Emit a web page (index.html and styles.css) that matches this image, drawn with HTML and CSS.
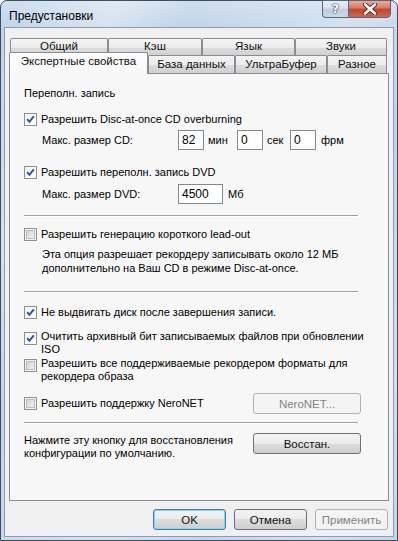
FILE: index.html
```html
<!DOCTYPE html>
<html>
<head>
<meta charset="utf-8">
<link rel="stylesheet" href="styles.css">
</head>
<body>
<div class="window">
  <div class="titlebar">
    <span class="title">Предустановки</span>
    <div class="caption">
      <span class="cap-btn help">?</span>
      <span class="cap-btn close"><svg width="16" height="12" viewBox="0 0 16 12"><path d="M3 1.5 L13 10.5 M13 1.5 L3 10.5" stroke="#5a2418" stroke-width="4.4" stroke-linecap="round"/><path d="M3 1.5 L13 10.5 M13 1.5 L3 10.5" stroke="#ffffff" stroke-width="2.6" stroke-linecap="round"/></svg></span>
    </div>
  </div>
  <div class="client">
    <div class="tabs">
      <div class="tabrow back">
        <span class="tab t98">Общий</span>
        <span class="tab t94">Кэш</span>
        <span class="tab t93">Язык</span>
        <span class="tab t92">Звуки</span>
      </div>
      <div class="tabrow front">
        <span class="tab sel">Экспертные свойства</span>
        <span class="tab t87">База данных</span>
        <span class="tab t92">УльтраБуфер</span>
        <span class="tab t60">Разное</span>
      </div>
    </div>
    <div class="page">
      <div class="group-title">Переполн. запись</div>

      <div class="cb-row m13">
        <span class="cb on"><svg width="9" height="9" viewBox="0 0 9 9"><path d="M1.2 4.2 L3.4 6.8 L7.8 1.4" fill="none" stroke="#2f4f9e" stroke-width="2"/></svg></span>
        <span class="cb-label">Разрешить Disc-at-once CD overburning</span>
      </div>
      <div class="field-row m4">
        <span class="flabel">Макс. размер CD:</span>
        <span class="input w26">82</span>
        <span class="unit u-min">мин</span>
        <span class="input w26">0</span>
        <span class="unit u-sek">сек</span>
        <span class="input w26">0</span>
        <span class="unit u-frm">фрм</span>
      </div>

      <div class="cb-row m16">
        <span class="cb on"><svg width="9" height="9" viewBox="0 0 9 9"><path d="M1.2 4.2 L3.4 6.8 L7.8 1.4" fill="none" stroke="#2f4f9e" stroke-width="2"/></svg></span>
        <span class="cb-label">Разрешить переполн. запись DVD</span>
      </div>
      <div class="field-row m5">
        <span class="flabel">Макс. размер DVD:</span>
        <span class="input w45">4500</span>
        <span class="unit u-mb">Мб</span>
      </div>

      <div class="sep m11"></div>

      <div class="cb-row m11">
        <span class="cb"></span>
        <span class="cb-label">Разрешить генерацию короткого lead-out</span>
      </div>
      <p class="note">Эта опция разрешает рекордеру записывать около 12 МБ<br>дополнительно на Ваш CD в режиме Disc-at-once.</p>

      <div class="sep m16"></div>

      <div class="cb-row m13">
        <span class="cb on"><svg width="9" height="9" viewBox="0 0 9 9"><path d="M1.2 4.2 L3.4 6.8 L7.8 1.4" fill="none" stroke="#2f4f9e" stroke-width="2"/></svg></span>
        <span class="cb-label">Не выдвигать диск после завершения записи.</span>
      </div>
      <div class="cb-row multi m11">
        <span class="cb on"><svg width="9" height="9" viewBox="0 0 9 9"><path d="M1.2 4.2 L3.4 6.8 L7.8 1.4" fill="none" stroke="#2f4f9e" stroke-width="2"/></svg></span>
        <span class="cb-label">Очитить архивный бит записываемых файлов при обновлении<br>ISO</span>
      </div>
      <div class="cb-row multi m1">
        <span class="cb"></span>
        <span class="cb-label">Разрешить все поддерживаемые рекордером форматы для<br>рекордера образа</span>
      </div>

      <div class="btn-row m10">
        <div class="cb-row">
          <span class="cb"></span>
          <span class="cb-label">Разрешить поддержку NeroNET</span>
        </div>
        <span class="btn wide disabled">NeroNET...</span>
      </div>

      <div class="sep m8"></div>

      <div class="restore-row m9">
        <span class="restore-text">Нажмите эту кнопку для восстановления<br>конфигурации по умолчанию.</span>
        <span class="btn wide">Восстан.</span>
      </div>
    </div>
    <div class="footer">
      <span class="btn foot focus">OK</span>
      <span class="btn foot">Отмена</span>
      <span class="btn foot disabled">Применить</span>
    </div>
  </div>
</div>
</body>
</html>
```

FILE: styles.css
```css
html, body {
  margin: 0;
  padding: 0;
  background: #ffffff;
}

body {
  font-family: "Liberation Sans", Arial, sans-serif;
  font-size: 11px;
  color: #000000;
}

.window {
  width: 398px;
  height: 541px;
  box-sizing: border-box;
  border: 1px solid #3e4e60;
  border-radius: 7px 7px 0 0;
  padding: 0 3px 3px 3px;
  display: flex;
  flex-direction: column;
  background:
    linear-gradient(115deg, rgba(255,255,255,0) 0%, rgba(255,255,255,0.35) 18%, rgba(255,255,255,0) 30%, rgba(255,255,255,0.3) 55%, rgba(255,255,255,0) 70%, rgba(255,255,255,0.25) 88%, rgba(255,255,255,0) 100%),
    linear-gradient(#cfdeee, #bfd2e8 30px, #c4d6ea);
}

.titlebar {
  height: 26px;
  display: flex;
  align-items: flex-start;
  padding-left: 5px;
}

.title {
  font-size: 12px;
  line-height: 14px;
  margin-top: 8px;
}

.caption {
  margin-left: auto;
  margin-right: 3px;
  margin-top: -1px;
  display: flex;
}

.cap-btn {
  height: 18px;
  box-sizing: border-box;
  border: 1px solid #56677c;
  display: flex;
  align-items: center;
  justify-content: center;
}

.help {
  width: 26px;
  border-right: none;
  border-radius: 0 0 0 4px;
  background: linear-gradient(#e8eef6, #d6e1ee 45%, #bccde0 50%, #cbd9e8);
  color: #ffffff;
  font-family: "DejaVu Sans", sans-serif;
  font-weight: bold;
  font-size: 12px;
  text-shadow: 0 0 1px #3c4c60, 0 0 1px #3c4c60, 0 0 2px #3c4c60;
}

.close {
  width: 43px;
  border-radius: 0 0 4px 0;
  background: linear-gradient(#e7ad9f, #d67a64 45%, #c1452b 50%, #d2664b);
}

.client {
  flex: 1;
  display: flex;
  flex-direction: column;
  background: #f0f0f0;
  border: 1px solid #8d9cb0;
  padding: 10px 4px 6px 4px;
}

.tabs {
  height: 35px;
  display: flex;
  flex-direction: column;
}

.tabrow {
  display: flex;
}

.tabrow.back {
  height: 17px;
  margin-left: 1px;
}

.tabrow.front {
  height: 18px;
  align-items: flex-end;
}

.tab {
  box-sizing: border-box;
  border: 1px solid #898c95;
  border-bottom: none;
  border-radius: 2px 2px 0 0;
  background: linear-gradient(#f4f4f4, #ececec 50%, #dddddd 50%, #d0d0d0);
  text-align: center;
  font-size: 11.5px;
  line-height: 15px;
  white-space: nowrap;
  color: #111111;
}

.back .tab {
  height: 18px;
}

.front .tab {
  height: 18px;
  line-height: 17px;
}

.t98 { width: 98px; }
.t94 { width: 94px; }
.t93 { width: 93px; }
.t92 { width: 92px; }
.t87 { width: 87px; }
.t60 { width: 60px; }

.tab.sel {
  width: 139px;
  height: 22px;
  margin-bottom: -1px;
  position: relative;
  z-index: 1;
  background: linear-gradient(#fdfdfd, #f7f7f7);
  line-height: 17px;
}

.page {
  flex: 1;
  background: #f7f7f7;
  border: 1px solid #898c95;
  padding: 13px 27px 0 14px;
}

.group-title {
  line-height: 13px;
}

.m1 { margin-top: 1px; }
.m4 { margin-top: 4px; }
.m5 { margin-top: 5px; }
.m8 { margin-top: 8px; }
.m9 { margin-top: 9px; }
.m10 { margin-top: 10px; }
.m11 { margin-top: 11px; }
.m13 { margin-top: 13px; }
.m16 { margin-top: 16px; }

.cb-row {
  display: flex;
  align-items: flex-start;
  line-height: 13px;
}

.cb {
  width: 13px;
  height: 13px;
  flex: none;
  box-sizing: border-box;
  border: 1px solid #8f8f8f;
  background: #f4f4f4;
  padding: 1px;
  margin-right: 4px;
  display: flex;
}

.cb::before {
  content: "";
  flex: 1;
  border: 1px solid #b9bcc2;
  background: linear-gradient(135deg, #cfd3d9, #f2f3f5);
}

.cb.on::before {
  display: none;
}

.cb.on {
  background: linear-gradient(135deg, #f4f4f4, #ffffff);
  align-items: center;
  justify-content: center;
  padding: 0;
}

.multi .cb {
  margin-top: 2px;
}

.cb-label {
  white-space: nowrap;
}

.field-row {
  display: flex;
  align-items: center;
  height: 20px;
  padding-left: 18px;
}

.flabel {
  width: 136px;
}

.input {
  box-sizing: border-box;
  height: 20px;
  border: 1px solid #828790;
  background: #ffffff;
  padding-left: 3px;
  line-height: 18px;
  font-size: 12px;
}

.w26 { width: 26px; }
.w45 { width: 45px; }

.unit { padding-left: 4px; }
.u-min { width: 29px; }
.u-sek { width: 23px; }
.u-mb { padding-left: 5px; }
.u-frm { padding-left: 5px; }

.sep {
  width: 334px;
  height: 0;
  border-top: 1px solid #a0a0a0;
  border-bottom: 1px solid #ffffff;
}

.note {
  margin: 6px 0 0 18px;
  line-height: 14px;
}

.btn-row {
  display: flex;
  align-items: center;
  justify-content: space-between;
  height: 21px;
}

.restore-row {
  display: flex;
  justify-content: space-between;
  align-items: flex-start;
}

.restore-text {
  line-height: 13px;
  margin-top: 1px;
}

.btn {
  box-sizing: border-box;
  height: 21px;
  border: 1px solid #707070;
  border-radius: 3px;
  background: linear-gradient(#f3f3f3, #ebebeb 50%, #dddddd 50%, #cfcfcf);
  display: flex;
  align-items: center;
  justify-content: center;
  font-size: 11.5px;
  color: #111111;
}

.btn.wide {
  width: 108px;
}

.btn.disabled {
  border-color: #adb2b5;
  background: #f4f4f4;
  color: #838383;
}

.footer {
  display: flex;
  justify-content: flex-end;
  gap: 8px;
  margin-top: 8px;
  padding-right: 1px;
}

.btn.foot {
  width: 73px;
}

.btn.focus {
  border-color: #3c7fb1;
  box-shadow: inset 0 0 0 1px #7fd6f7;
}
```
